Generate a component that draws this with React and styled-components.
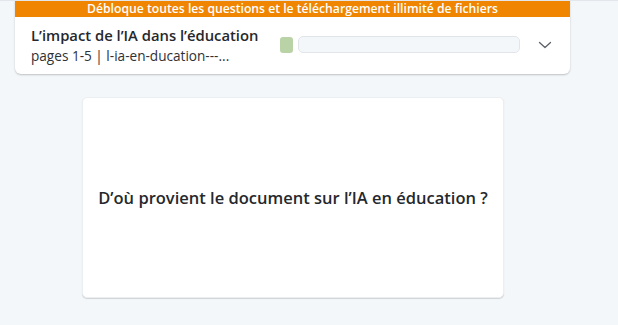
import styled, { createGlobalStyle } from "styled-components";

const GlobalStyle = createGlobalStyle`
  html, body {
    margin: 0;
    padding: 0;
    background: #f4f7fa;
    font-family: "Open Sans", "Noto Sans", sans-serif;
    color: #25282d;
  }
`;

const Page = styled.div`
  width: 618px;
  height: 325px;
  overflow: hidden;
  border-top: 1px solid #e3e7ec;
  box-sizing: border-box;
`;

const DocCard = styled.div`
  margin-left: 15px;
  margin-top: -1px;
  width: 555px;
  background: #fff;
  border-radius: 0 0 6px 6px;
  box-shadow: 0 1px 2px rgba(0, 0, 0, 0.22);
  overflow: hidden;
`;

const Banner = styled.div`
  height: 17px;
  background: #ef8500;
  color: #fff;
  font-size: 12.2px;
  font-weight: 600;
  line-height: 17px;
  text-align: center;
`;

const DocRow = styled.div`
  display: flex;
  align-items: center;
  padding: 0 0 0 16px;
  height: 57px;
`;

const DocInfo = styled.div`
  display: flex;
  flex-direction: column;
  width: 249px;
  flex-shrink: 0;
`;

const DocTitle = styled.div`
  font-size: 14.8px;
  font-weight: 600;
  line-height: 20px;
  white-space: nowrap;
`;

const DocMeta = styled.div`
  font-size: 13.6px;
  line-height: 21px;
  color: #2e3136;
  white-space: nowrap;
`;

const Swatch = styled.div`
  width: 13px;
  height: 16px;
  border-radius: 3px;
  background: ${(p) => p.color};
  flex-shrink: 0;
  margin-bottom: 2px;
`;

const Progress = styled.div`
  margin-left: 5px;
  width: 222px;
  height: 17px;
  border: 1px solid #e1e5ea;
  background: #f4f7fa;
  border-radius: 5px;
  box-sizing: border-box;
  flex-shrink: 0;
  margin-bottom: 2px;
`;

const Chevron = styled.div`
  margin-left: 17px;
  margin-bottom: 2px;
  display: flex;
  align-items: center;
  color: #5d6169;
`;

const Main = styled.div`
  padding: 23px 0 0 82px;
`;

const QuestionCard = styled.div`
  width: 422px;
  height: 201px;
  background: #fff;
  border: 1px solid #eceff2;
  border-radius: 5px;
  box-shadow: 0 1px 1px rgba(0, 0, 0, 0.15);
  box-sizing: border-box;
  display: flex;
  align-items: center;
  justify-content: center;
`;

const Question = styled.div`
  font-size: 16.5px;
  font-weight: 600;
  color: #25282d;
  white-space: nowrap;
`;

export default function App() {
  return (
    <Page>
      <GlobalStyle />
      <DocCard>
        <Banner>Débloque toutes les questions et le téléchargement illimité de fichiers</Banner>
        <DocRow>
          <DocInfo>
            <DocTitle>L’impact de l’IA dans l’éducation</DocTitle>
            <DocMeta>pages 1-5 | l-ia-en-ducation---...</DocMeta>
          </DocInfo>
          <Swatch color="#b9d2a6" />
          <Progress />
          <Chevron>
            <svg width="16" height="16" viewBox="0 0 16 16" fill="none">
              <path d="M2.5 5.5 L8 10.5 L13.5 5.5" stroke="currentColor" strokeWidth="1.3" strokeLinecap="round" strokeLinejoin="round" />
            </svg>
          </Chevron>
        </DocRow>
      </DocCard>
      <Main>
        <QuestionCard>
          <Question>D’où provient le document sur l’IA en éducation ?</Question>
        </QuestionCard>
      </Main>
    </Page>
  );
}
